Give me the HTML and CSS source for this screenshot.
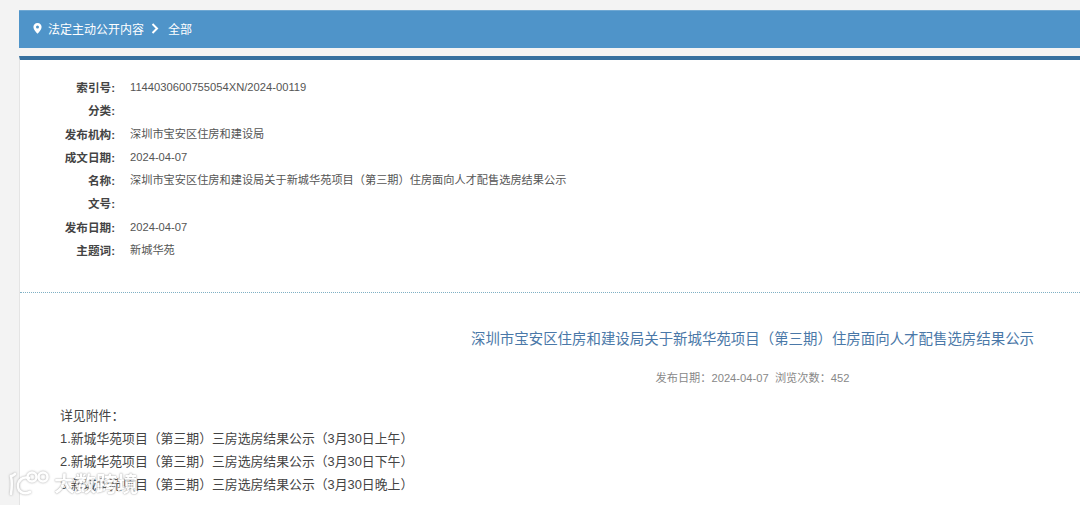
FILE: index.html
```html
<!DOCTYPE html>
<html lang="zh-CN">
<head>
<meta charset="utf-8">
<title>全部</title>
<link rel="stylesheet" href="styles.css">
</head>
<body>
<div class="page">
  <nav class="crumb">
    <svg class="pin" width="9" height="11" viewBox="0 0 9 11"><path fill="#fff" fill-rule="evenodd" d="M4.5 0C2 0 .4 1.800.4 4c0 2.600 2.700 5.200 4.100 6.800C5.900 9.200 8.600 6.600 8.600 4 8.600 1.800 7 0 4.500 0zm0 2.500a1.500 1.500 0 1 1 0 3 1.500 1.500 0 0 1 0-3z"/></svg>
    <span>法定主动公开内容</span>
    <svg class="chev" width="8" height="11" viewBox="0 0 8 11"><path fill="none" stroke="#fff" stroke-width="2" d="M1.500 1l4.500 4.500L1.500 10"/></svg>
    <span>全部</span>
  </nav>
  <main class="card">
    <dl class="info">
      <div class="row"><dt>索引号:</dt><dd>1144030600755054XN/2024-00119</dd></div>
      <div class="row"><dt>分类:</dt><dd></dd></div>
      <div class="row"><dt>发布机构:</dt><dd>深圳市宝安区住房和建设局</dd></div>
      <div class="row"><dt>成文日期:</dt><dd>2024-04-07</dd></div>
      <div class="row"><dt>名称:</dt><dd>深圳市宝安区住房和建设局关于新城华苑项目（第三期）住房面向人才配售选房结果公示</dd></div>
      <div class="row"><dt>文号:</dt><dd></dd></div>
      <div class="row"><dt>发布日期:</dt><dd>2024-04-07</dd></div>
      <div class="row"><dt>主题词:</dt><dd>新城华苑</dd></div>
    </dl>
    <section class="article">
      <div class="head">
        <h1>深圳市宝安区住房和建设局关于新城华苑项目（第三期）住房面向人才配售选房结果公示</h1>
        <p class="meta">发布日期：2024-04-07&nbsp;&nbsp;浏览次数：452</p>
      </div>
      <div class="body">
        <p>详见附件：</p>
        <p>1.新城华苑项目（第三期）三房选房结果公示（3月30日上午）</p>
        <p>2.新城华苑项目（第三期）三房选房结果公示（3月30日下午）</p>
        <p>3.新城华苑项目（第三期）三房选房结果公示（3月30日晚上）</p>
      </div>
    </section>
  </main>
</div>
<div class="mark">
  <svg class="mark-logo" width="42" height="28" viewBox="0 0 42 28"><g fill="none" stroke="#fff" stroke-width="2.600" stroke-linecap="round"><path d="M3 6c1 5 1 11 0 18"/><path d="M3 6c2 0 3-1 4-2"/><path d="M21 8c-6-2-11 2-11 8 0 6 6 9 12 6"/><circle cx="24" cy="7" r="4.500"/><circle cx="35" cy="7" r="4.500"/></g></svg>
  <span>大数跨境</span>
</div>
</body>
</html>
```
FILE: styles.css
```css
html, body {
  margin: 0;
  padding: 0;
  height: 505px;
  overflow: hidden;
}
body {
  position: relative;
  background: #f3f3f3;
  font-family: "Liberation Sans", "Noto Sans CJK SC", sans-serif;
  color: #333;
}
.page {
  padding: 10px 0 0 19px;
}
.crumb {
  display: flex;
  align-items: center;
  height: 38px;
  box-sizing: border-box;
  border-top: 1px solid #6fa8d3;
  padding: 0 0 2px 14px;
  background: #4f94c9;
  color: #fff;
  font-size: 12px;
}
.pin { margin-right: 6px; }
.chev { margin: 0 9px 0 7px; }
.card {
  margin-top: 8px;
  border-top: 4px solid #36709f;
  border-left: 1px solid #e4e4e4;
  background: #fff;
  height: 445px;
  overflow: hidden;
}
.info {
  margin: 0;
  padding: 16px 0 0;
  height: 233px;
  border-bottom: 1px dotted #7fb0c4;
  box-sizing: border-box;
  font-size: 11.200px;
}
.row {
  display: flex;
  height: 23.300px;
  line-height: 23.300px;
}
dt {
  width: 95px;
  text-align: right;
  font-size: 11.600px;
  font-weight: 700;
  color: #444;
}
dd {
  margin: 0 0 0 15px;
  color: #555;
}
.head {
  padding-left: 450px;
  width: 565px;
  text-align: center;
}
h1 {
  margin: 34px 0 0;
  font-size: 14.450px;
  line-height: 24px;
  font-weight: 400;
  color: #4a78a8;
  white-space: nowrap;
}
.meta {
  margin: 18px 0 0;
  font-size: 11.200px;
  line-height: 18px;
  color: #888;
}
.body {
  margin-top: 16.500px;
  padding-left: 40px;
  font-size: 12.850px;
  color: #444;
}
.body p {
  margin: 0;
  line-height: 23px;
}
.mark {
  position: absolute;
  left: 8px;
  bottom: 7px;
  display: flex;
  align-items: center;
  gap: 4px;
  color: #fff;
  font-size: 21px;
  line-height: 26px;
  font-weight: 700;
  opacity: 0.85;
  text-shadow: 0 0 2px #999, 0 0 1px #aaa;
}
.mark-logo {
  filter: drop-shadow(0 0 1px #999);
}
```
